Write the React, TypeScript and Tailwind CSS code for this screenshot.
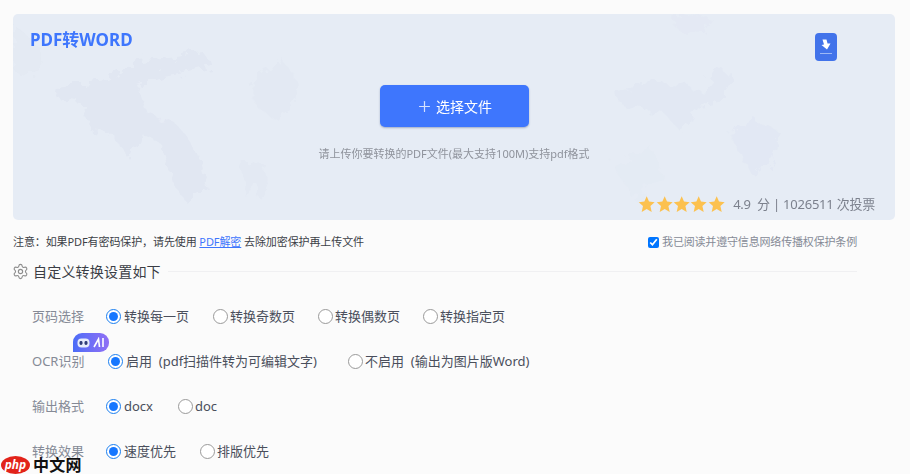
import { Plus, Settings } from 'lucide-react'

const font = { fontFamily: '"Noto Sans", "Noto Sans CJK SC", sans-serif' }

function Radio({ label, checked, className = '' }: { label: string; checked?: boolean; className?: string }) {
  return (
    <label className={`flex items-center ${className}`}>
      <span
        className={`flex h-[15px] w-[15px] shrink-0 items-center justify-center rounded-full border bg-white ${
          checked ? 'mr-[3px] border-[#1a7ff0]' : 'mr-[2px] border-[#9a9a9a]'
        }`}
      >
        {checked && <span className="h-[9px] w-[9px] rounded-full bg-[#1677ff]" />}
      </span>
      <span className="whitespace-pre text-[13px] text-[#4a4f5c]">{label}</span>
    </label>
  )
}

function Row({ label, children }: { label: string; children: React.ReactNode }) {
  return (
    <div className="relative flex h-[45px] items-center pl-[32px]">
      <span className="w-[74px] shrink-0 text-[13px] text-[#858a96]">{label}</span>
      {children}
    </div>
  )
}

// faint paint splatter behind the upload panel
function Splatter() {
  return (
    <svg className="absolute inset-0 h-full w-full" viewBox="0 0 882 206" preserveAspectRatio="none">
      <defs>
        <filter id="rough" x="-10%" y="-10%" width="120%" height="120%">
          <feTurbulence type="fractalNoise" baseFrequency="0.09" numOctaves="3" seed="4" />
          <feDisplacementMap in="SourceGraphic" scale="22" />
          <feGaussianBlur stdDeviation="0.6" />
        </filter>
      </defs>
      <g fill="#e1e7f2" filter="url(#rough)">
        <path d="M40 72 L95 66 L120 48 L190 38 L200 52 L150 62 L125 72 L135 100 L165 112 L185 140 L195 175 L172 188 L158 165 L148 130 L128 120 L116 145 L100 120 L78 118 L72 90 L45 85 Z" />
        <path d="M0 10 L25 30 L30 55 L12 65 L0 55 Z" opacity="0.5" />
        <path d="M235 70 L270 45 L285 70 L270 110 L245 95 Z" opacity="0.45" />
        <path d="M225 150 L250 148 L255 170 L235 185 Z" opacity="0.45" />
        <path d="M600 75 L655 68 L690 78 L705 55 L722 62 L705 88 L685 92 L668 118 L650 98 L610 92 Z" opacity="0.8" />
        <path d="M715 118 L745 108 L768 118 L760 145 L738 160 L728 140 Z" opacity="0.65" />
        <path d="M660 0 L700 5 L690 18 L665 16 Z" opacity="0.4" />
        <path d="M600 150 L640 135 L650 165 L620 185 Z" opacity="0.3" />
      </g>
    </svg>
  )
}

export default function App() {
  return (
    <div className="h-[474px] w-[910px] overflow-hidden bg-[#fbfbfb] pl-[13px] pt-[14px]" style={font}>
      {/* Upload panel */}
      <div className="relative h-[206px] w-[882px] overflow-hidden rounded-[5px] bg-[#e6ecf5]">
        <Splatter />
        <div className="relative flex h-full flex-col">
          <div className="flex items-start justify-between pl-[17px] pr-[58px] pt-[15px]">
            <h1 className="text-[17px] font-bold leading-[22px] text-[#3e76fd]">PDF转WORD</h1>
            <div className="mt-[4px] flex h-[28px] w-[22px] flex-col items-center rounded-[4px] bg-[#4273ea] pt-[6px]">
              <svg width="12" height="12" viewBox="0 0 12 12" fill="#fff">
                <path d="M2.5 0.5 H6.5 L7.5 4.5 H10.5 L7 10.5 L1.5 6 L4 5.5 Z" />
              </svg>
              <span className="mt-[2px] h-px w-[12px] bg-[#9db8f5]" />
            </div>
          </div>
          <button className="mx-auto mt-[24px] flex h-[42px] w-[149px] items-center justify-center rounded-[5px] bg-[#3e76fd] text-[14px] text-white shadow-[0_1px_2px_rgba(60,80,130,0.4)]">
            <Plus className="mr-[3px] h-[17px] w-[17px] text-[#d5e1fe]" strokeWidth={1.7} />
            选择文件
          </button>
          <p className="mt-[19px] text-center text-[11px] leading-[16px] text-[#8f939c]">
            请上传你要转换的PDF文件(最大支持100M)支持pdf格式
          </p>
          <div className="mt-auto flex items-center justify-end pb-[7px] pr-[20px]">
            <div className="mr-[8px] flex text-[#fcc14f]">
              {[0, 1, 2, 3, 4].map((i) => (
                <svg key={i} width="17.4" height="18" viewBox="0 0 24 24" preserveAspectRatio="none" fill="currentColor">
                  <path d="M12 1.5 L15.2 8.8 L23 9.6 L17.1 14.8 L18.9 22.5 L12 18.5 L5.1 22.5 L6.9 14.8 L1 9.6 L8.8 8.8 Z" />
                </svg>
              ))}
            </div>
            <span className="whitespace-pre text-[13px] leading-[18px] tracking-[-0.23px] text-[#7c818d]">4.9  分 | 1026511 次投票</span>
          </div>
        </div>
      </div>

      {/* Notice */}
      <div className="mt-[14px] flex h-[16px] w-[844px] items-center justify-between text-[11px]">
        <p className="tracking-[-0.1px] text-[#3c3f47]">
          注意：如果PDF有密码保护，请先使用 <a className="text-[#3e76fd] underline">PDF解密</a> 去除加密保护再上传文件
        </p>
        <label className="flex items-center tracking-[-0.17px] text-[#858a96]">
          <input type="checkbox" checked readOnly className="mr-[3px] h-[11px] w-[11px] accent-[#0075ff]" />
          我已阅读并遵守信息网络传播权保护条例
        </label>
      </div>

      {/* Section title */}
      <div className="mt-[9px] flex h-[24px] w-[844px] items-center">
        <Settings className="-ml-px h-[17px] w-[17px] text-[#8e8e8e]" strokeWidth={1.6} />
        <span className="ml-[4px] whitespace-nowrap text-[14px] tracking-[0.2px] text-[#3a3d45]">自定义转换设置如下</span>
        <span className="ml-[7px] h-px flex-1 bg-[#f0f0f2]" />
      </div>

      {/* Options */}
      <div className="-ml-[13px] mt-[11px]">
        <Row label="页码选择">
          <Radio label="转换每一页" checked />
          <Radio label="转换奇数页" className="ml-[24px]" />
          <Radio label="转换偶数页" className="ml-[23px]" />
          <Radio label="转换指定页" className="ml-[23px]" />
        </Row>
        <Row label="OCR识别">
          <div className="absolute left-[73px] top-[-6px] flex h-[19px] w-[36px] items-center justify-center gap-[3px] rounded-t-[9px] rounded-br-[9px] bg-gradient-to-r from-[#4a6cf7] to-[#8f6ff5]">
            <svg width="13" height="10" viewBox="0 0 13 10">
              <rect x="0.5" y="0.5" width="12" height="9" rx="4" fill="#e6ecfb" />
              <rect x="2.5" y="3" width="3" height="4" rx="1.4" fill="#2f3d78" />
              <rect x="7.5" y="3" width="3" height="4" rx="1.4" fill="#2f3d78" />
            </svg>
            <svg width="12" height="11" viewBox="0 0 12 11" fill="none" stroke="#fff" strokeWidth="1.6">
              <path d="M1 10 L5.5 2 L6.5 10 M10 1 V10" />
            </svg>
          </div>
          <Radio label="启用  (pdf扫描件转为可编辑文字)" checked className="ml-[2px]" />
          <Radio label="不启用  (输出为图片版Word)" className="ml-[31px]" />
        </Row>
        <Row label="输出格式">
          <Radio label="docx" checked />
          <Radio label="doc" className="ml-[25px]" />
        </Row>
        <Row label="转换效果">
          <Radio label="速度优先" checked />
          <Radio label="排版优先" className="ml-[24px]" />
        </Row>
      </div>

      {/* Site watermark */}
      <div className="absolute bottom-0 left-0 flex h-[19px] items-center pl-px">
        <span className="flex h-[18px] w-[29px] items-center justify-center rounded-[50%] bg-[#e2231a] text-[12px] font-bold italic leading-none text-white">
          php
        </span>
        <span className="ml-[3px] text-[16px] font-bold leading-none tracking-[0.3px] text-[#111]">中文网</span>
      </div>
    </div>
  )
}
